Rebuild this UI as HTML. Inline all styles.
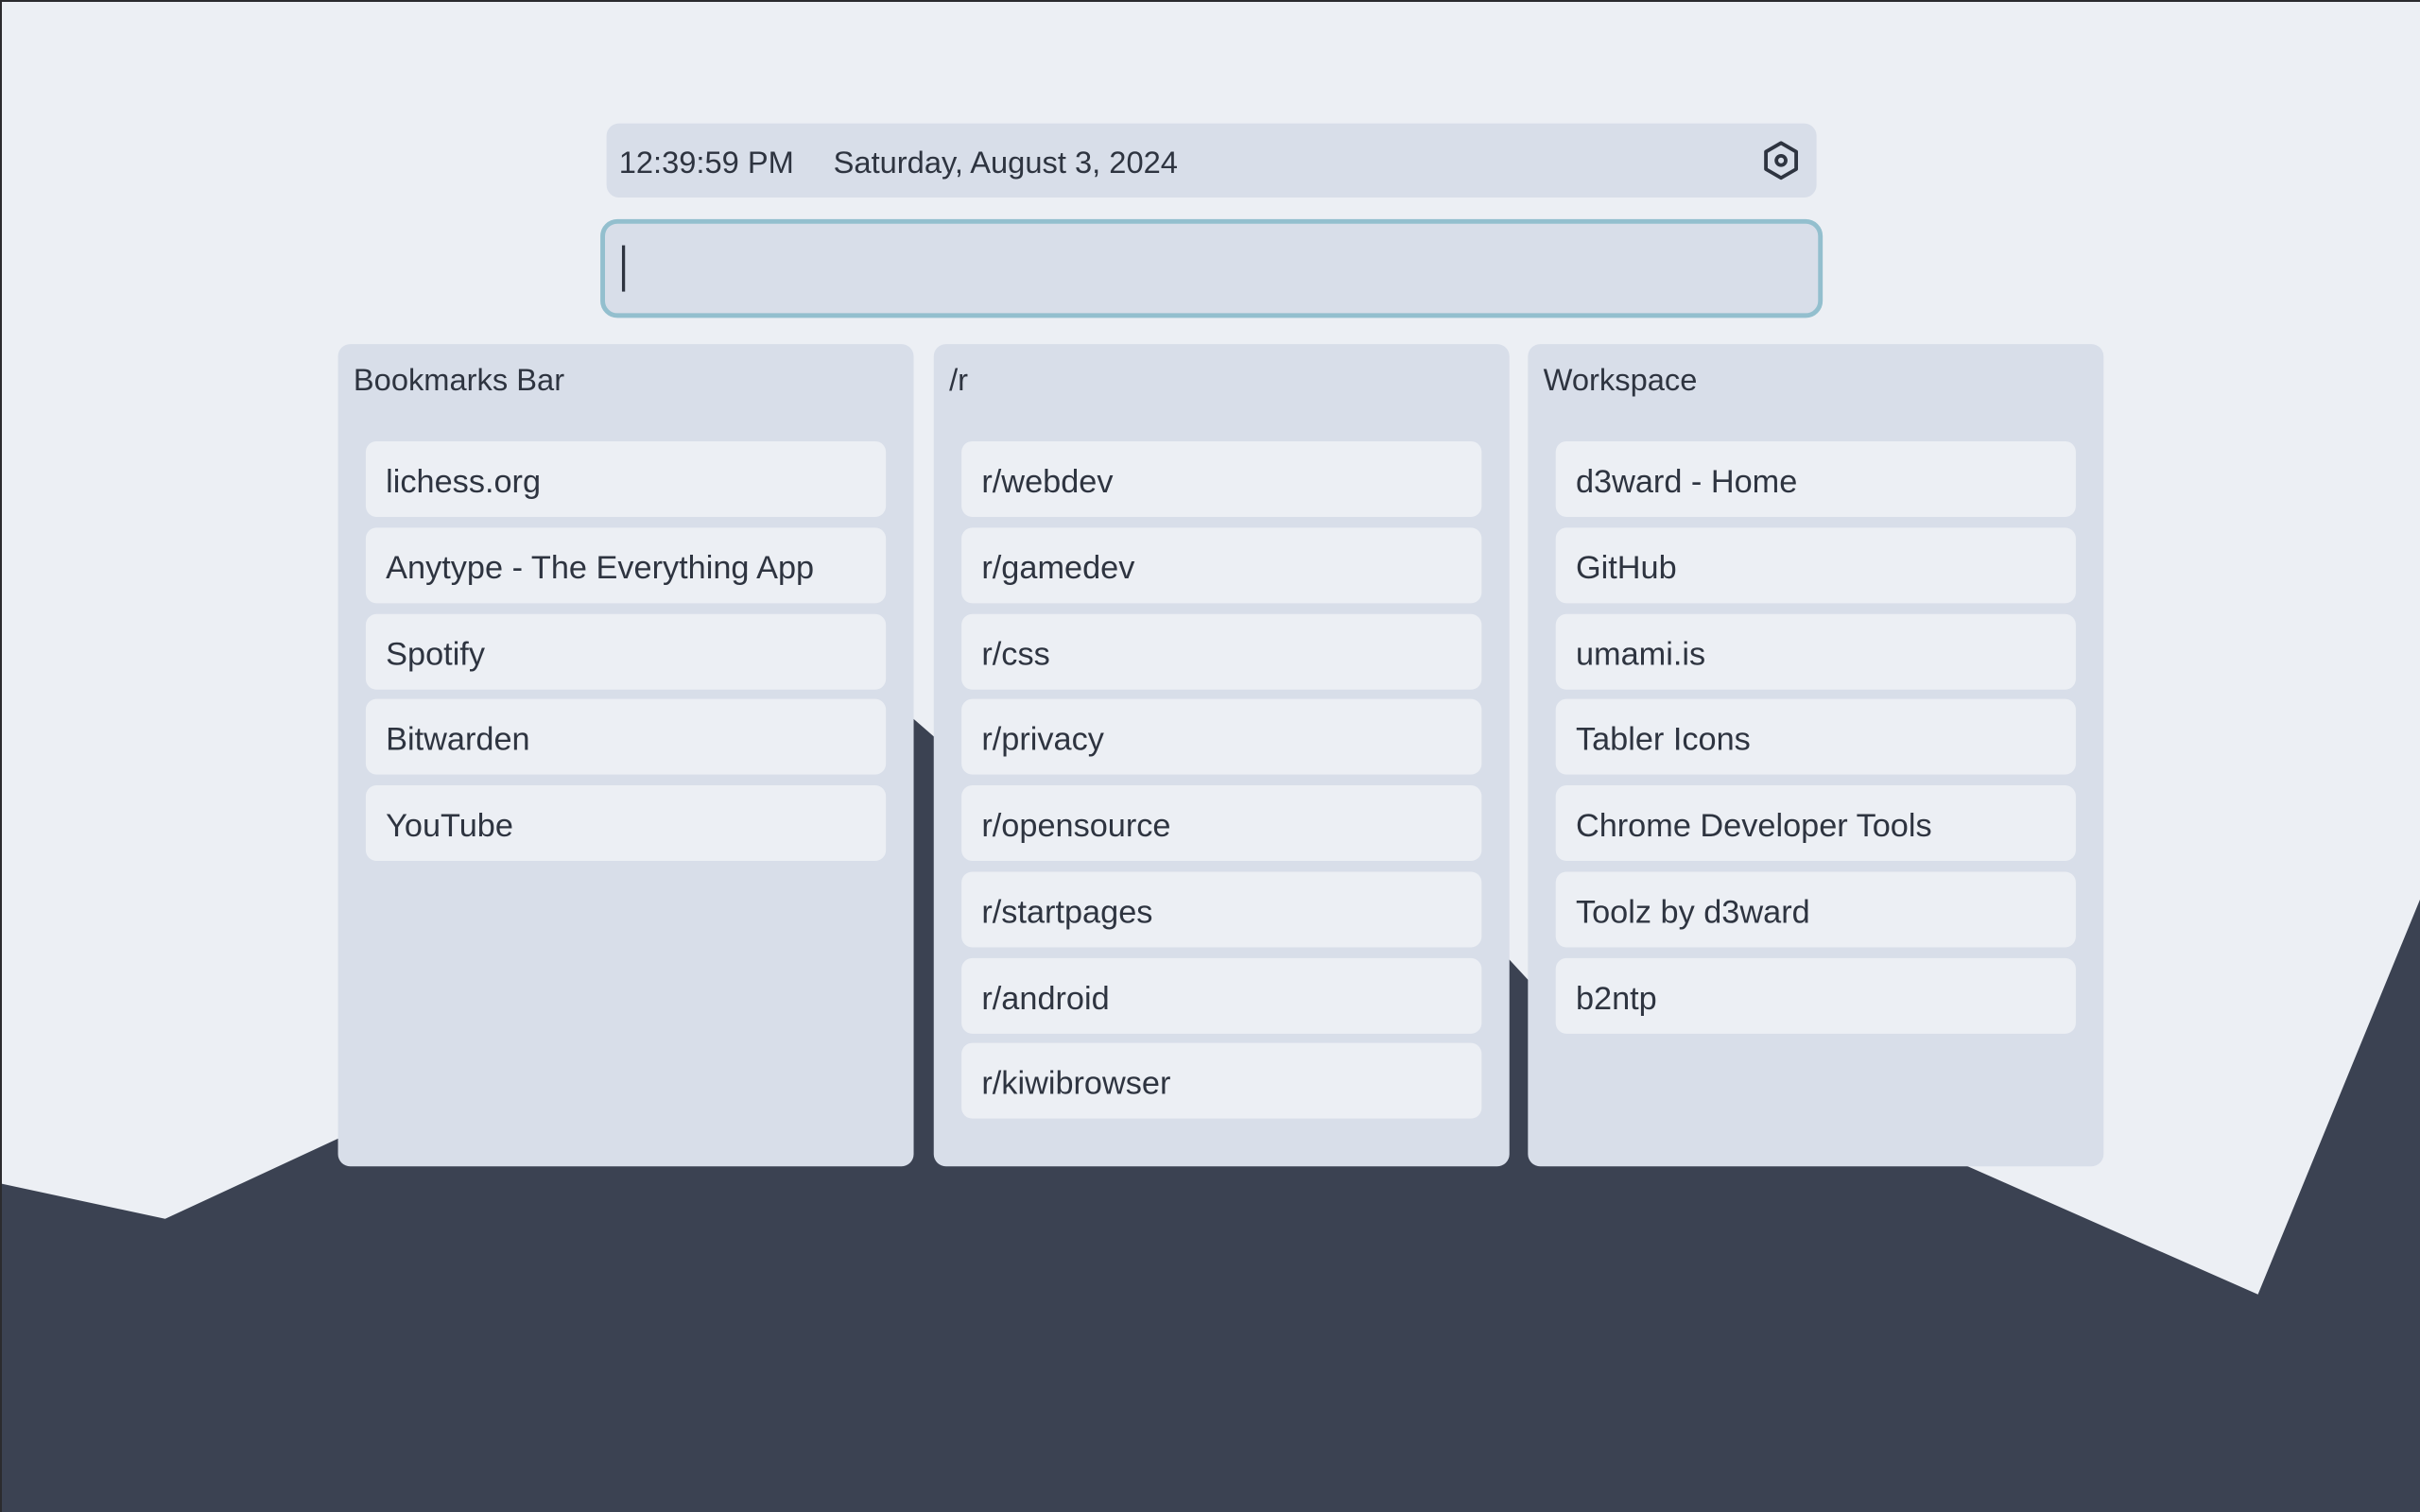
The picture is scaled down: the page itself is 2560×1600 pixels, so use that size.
<!DOCTYPE html>
<html><head><meta charset="utf-8"><style>
html,body{margin:0;padding:0;width:2560px;height:1600px;overflow:hidden;background:#eceff4}
#w{position:absolute;left:0;top:0;width:1568px;height:980px;transform:scale(1.632653);transform-origin:0 0;font-family:"Liberation Sans",sans-serif;color:#2e3440}
.bar{position:absolute;left:393px;top:80px;width:784px;height:48px;background:#d8dee9;border-radius:8px}
.bar span{position:absolute;top:15px;font-size:20px;color:#2e3440}
.search{position:absolute;left:389px;top:142px;border:3.5px solid #93bfce;border-radius:11px;background:#d8dee9;box-sizing:content-box;width:786px;height:58px}
.caret{position:absolute;left:11px;top:14px;width:2px;height:30px;background:#2e3440}
.col{position:absolute;top:223px;width:373px;height:533px;background:#d8dee9;border-radius:8px}
.col h2{margin:0;position:absolute;left:10px;top:13px;font-size:20px;font-weight:normal}
.it{position:absolute;left:18px;width:337px;height:49px;background:#eceff4;border-radius:7px;font-size:21px;line-height:53px;padding-left:13px;box-sizing:border-box}
.edge{position:absolute;left:0;top:0;width:2560px;height:2px;background:#2b2b2e}
.edgel{position:absolute;left:0;top:0;width:2px;height:1600px;background:#2b2b2e}
</style></head><body>
<div id="w">
<svg style="position:absolute;left:0;top:0" width="1568" height="980"><polygon fill="#3b4252" points="0,767 107,790 219,738 592,466 700,560 978,622 990,635 1275,756 1463,839 1568,583 1568,980 0,980"/></svg>
<div class="bar"><span style="left:8px">12:39:59 PM</span><span style="left:147px">Saturday, August 3, 2024</span>
<svg style="position:absolute;left:747px;top:10px" width="28" height="28" viewBox="0 0 24 24" fill="none" stroke="#2e3440" stroke-width="2" stroke-linejoin="round"><path d="M12 2.3l8.4 4.85v9.7L12 21.7l-8.4-4.85v-9.7z"/><circle cx="12" cy="12" r="2.6"/></svg></div>
<div class="search"><div class="caret"></div></div>
<div class="col" style="left:219px"><h2>Bookmarks Bar</h2>
<div class="it" style="top:63px">lichess.org</div>
<div class="it" style="top:119px">Anytype - The Everything App</div>
<div class="it" style="top:175px">Spotify</div>
<div class="it" style="top:230px">Bitwarden</div>
<div class="it" style="top:286px">YouTube</div></div>
<div class="col" style="left:605px"><h2>/r</h2>
<div class="it" style="top:63px">r/webdev</div>
<div class="it" style="top:119px">r/gamedev</div>
<div class="it" style="top:175px">r/css</div>
<div class="it" style="top:230px">r/privacy</div>
<div class="it" style="top:286px">r/opensource</div>
<div class="it" style="top:342px">r/startpages</div>
<div class="it" style="top:398px">r/android</div>
<div class="it" style="top:453px">r/kiwibrowser</div></div>
<div class="col" style="left:990px"><h2>Workspace</h2>
<div class="it" style="top:63px">d3ward - Home</div>
<div class="it" style="top:119px">GitHub</div>
<div class="it" style="top:175px">umami.is</div>
<div class="it" style="top:230px">Tabler Icons</div>
<div class="it" style="top:286px">Chrome Developer Tools</div>
<div class="it" style="top:342px">Toolz by d3ward</div>
<div class="it" style="top:398px">b2ntp</div></div>
</div>
<div class="edge"></div><div class="edgel"></div>
</body></html>
